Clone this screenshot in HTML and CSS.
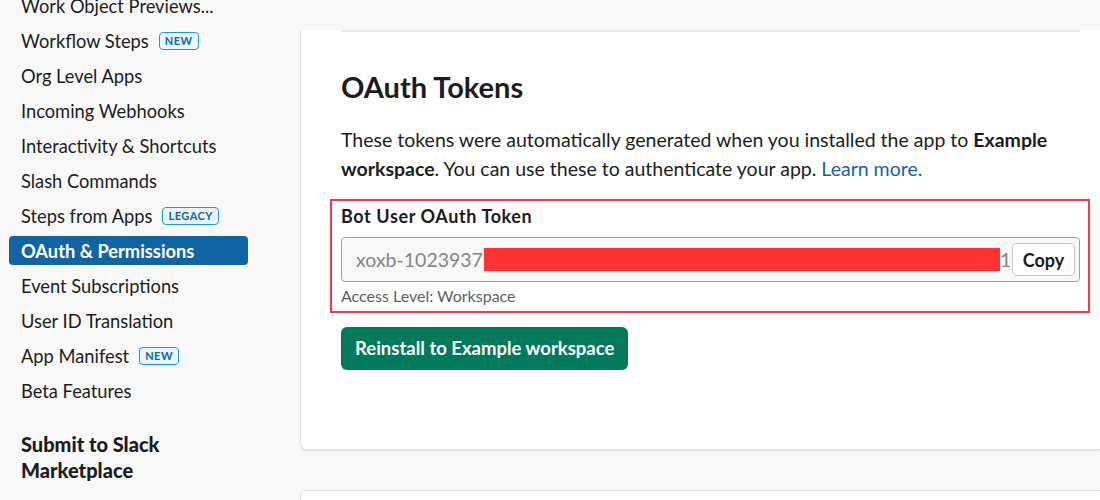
FILE: index.html
```html
<!DOCTYPE html>
<html lang="en">
<head>
    <meta charset="UTF-8">
    <meta name="viewport" content="width=device-width, initial-scale=1.0">
    <title>OAuth &amp; Permissions</title>
    <link rel="stylesheet" href="styles.css">
</head>
<body>
    <!-- sidebar -->
    <aside class="sidebar">
        <ul class="nav">
            <li class="nav-item">Work Object Previews...</li>
            <li class="nav-item">Workflow Steps <span class="badge">NEW</span></li>
            <li class="nav-item">Org Level Apps</li>
            <li class="nav-item">Incoming Webhooks</li>
            <li class="nav-item">Interactivity &amp; Shortcuts</li>
            <li class="nav-item">Slash Commands</li>
            <li class="nav-item">Steps from Apps <span class="badge">LEGACY</span></li>
            <li class="nav-item nav-item-active">OAuth &amp; Permissions</li>
            <li class="nav-item">Event Subscriptions</li>
            <li class="nav-item">User ID Translation</li>
            <li class="nav-item">App Manifest <span class="badge">NEW</span></li>
            <li class="nav-item">Beta Features</li>
        </ul>
        <h3 class="nav-heading">Submit to Slack Marketplace</h3>
    </aside>

    <!-- main -->
    <main class="main">
        <section class="card">
            <hr class="divider">
            <h2 class="card-title">OAuth Tokens</h2>
            <p class="card-text">These tokens were automatically generated when you installed the app to <b>Example workspace</b>. You can use these to authenticate your app. <a href="#" class="link">Learn more.</a></p>

            <div class="token-field">
                <label class="token-label">Bot User OAuth Token</label>
                <div class="token-input">
                    <span class="token-value">xoxb-1023937</span>
                    <span class="redact"></span>
                    <span class="token-value">1</span>
                    <button class="btn-copy">Copy</button>
                </div>
                <div class="token-hint">Access Level: Workspace</div>
            </div>

            <a href="#" class="btn-primary">Reinstall to Example workspace</a>
        </section>
        <section class="card card-next"></section>
    </main>
</body>
</html>
```

FILE: styles.css
```css
*{
    box-sizing: border-box;
}
body{
    margin: 0;
    height: 500px;
    overflow: hidden;
    display: flex;
    background-color: #f8f8f8;
    font-family: Lato, "Noto Sans", sans-serif;
    color: #1d1c1d;
}
/* sidebar */
.sidebar{
    width: 300px;
    flex-shrink: 0;
    padding-left: 9px;
}
.nav{
    list-style: none;
    margin: -9px 0 0 0;
    padding: 0;
    width: 239px;
}
.nav-item{
    display: flex;
    align-items: center;
    height: 29px;
    margin-bottom: 6px;
    padding: 0 12px;
    font-size: 18.3px;
    border-radius: 4px;
}
.nav-item-active{
    background-color: #1164a3;
    color: #fff;
    font-weight: 700;
}
.badge{
    margin-left: 10px;
    padding: 1px 5px;
    border: 1px solid #1d9bd1;
    border-radius: 4px;
    background-color: #eaf6fb;
    color: #1264a3;
    font-size: 11px;
    font-weight: 700;
    letter-spacing: 0.5px;
    line-height: 14px;
}
.nav-heading{
    max-width: 200px;
    margin: 26px 0 0 12px;
    font-size: 20px;
    line-height: 26px;
    font-weight: 900;
}
/* main */
.main{
    flex: 1;
    min-width: 0;
}
.card{
    background-color: #fff;
    border: 1px solid #e0e0e0;
    border-top: none;
    border-right: none;
    border-radius: 0 0 0 6px;
    box-shadow: 0 1px 2px rgba(0,0,0,0.08);
    padding: 0 20px 79px 40px;
}
.card-next{
    margin-top: 40px;
    border-top: 1px solid #e0e0e0;
    border-radius: 6px 0 0 0;
    height: 40px;
}
.divider{
    margin: 30px 0 0 0;
    border: none;
    border-top: 2px solid #e8e8e8;
}
.card-title{
    margin: 38px 0 0 0;
    font-size: 29px;
    line-height: 34px;
    font-weight: 700;
}
.card-text{
    margin: 21px 0 0 0;
    font-size: 19.5px;
    line-height: 29px;
}
.card-text b{
    font-weight: 700;
}
.link{
    color: #1264a3;
    text-decoration: none;
}
/* token field (red annotation box) */
.token-field{
    margin: 16px -10px 0 -11px;
    padding: 4px 8px 6px 9px;
    border: 2px solid #ef3b42;
}
.token-label{
    display: block;
    font-size: 18px;
    line-height: 22px;
    font-weight: 700;
    letter-spacing: 0.6px;
    margin-bottom: 10px;
}
.token-input{
    display: flex;
    align-items: center;
    height: 45px;
    padding: 0 4px 0 14px;
    border: 1px solid #a0a0a0;
    border-radius: 4px;
    background-color: #f8f8f8;
}
.token-value{
    font-size: 19.5px;
    color: #868686;
}
.redact{
    display: inline-block;
    width: 516px;
    height: 23px;
    margin-left: 1px;
    background-color: #ff3333;
}
.btn-copy{
    margin-left: auto;
    width: 63px;
    height: 33px;
    padding: 0;
    border: 1px solid #c8c8c8;
    border-radius: 4px;
    background-color: #fff;
    font-family: Lato, sans-serif;
    font-size: 18px;
    font-weight: 700;
    color: #1d1c1d;
}
.token-hint{
    margin-top: 5px;
    font-size: 16px;
    line-height: 18px;
    color: #616061;
}
.btn-primary{
    display: inline-block;
    margin-top: 14px;
    padding: 0 14px;
    height: 43px;
    line-height: 43px;
    border-radius: 6px;
    background-color: #007a5a;
    color: #fff;
    font-size: 18.5px;
    font-weight: 700;
    text-decoration: none;
}
```
